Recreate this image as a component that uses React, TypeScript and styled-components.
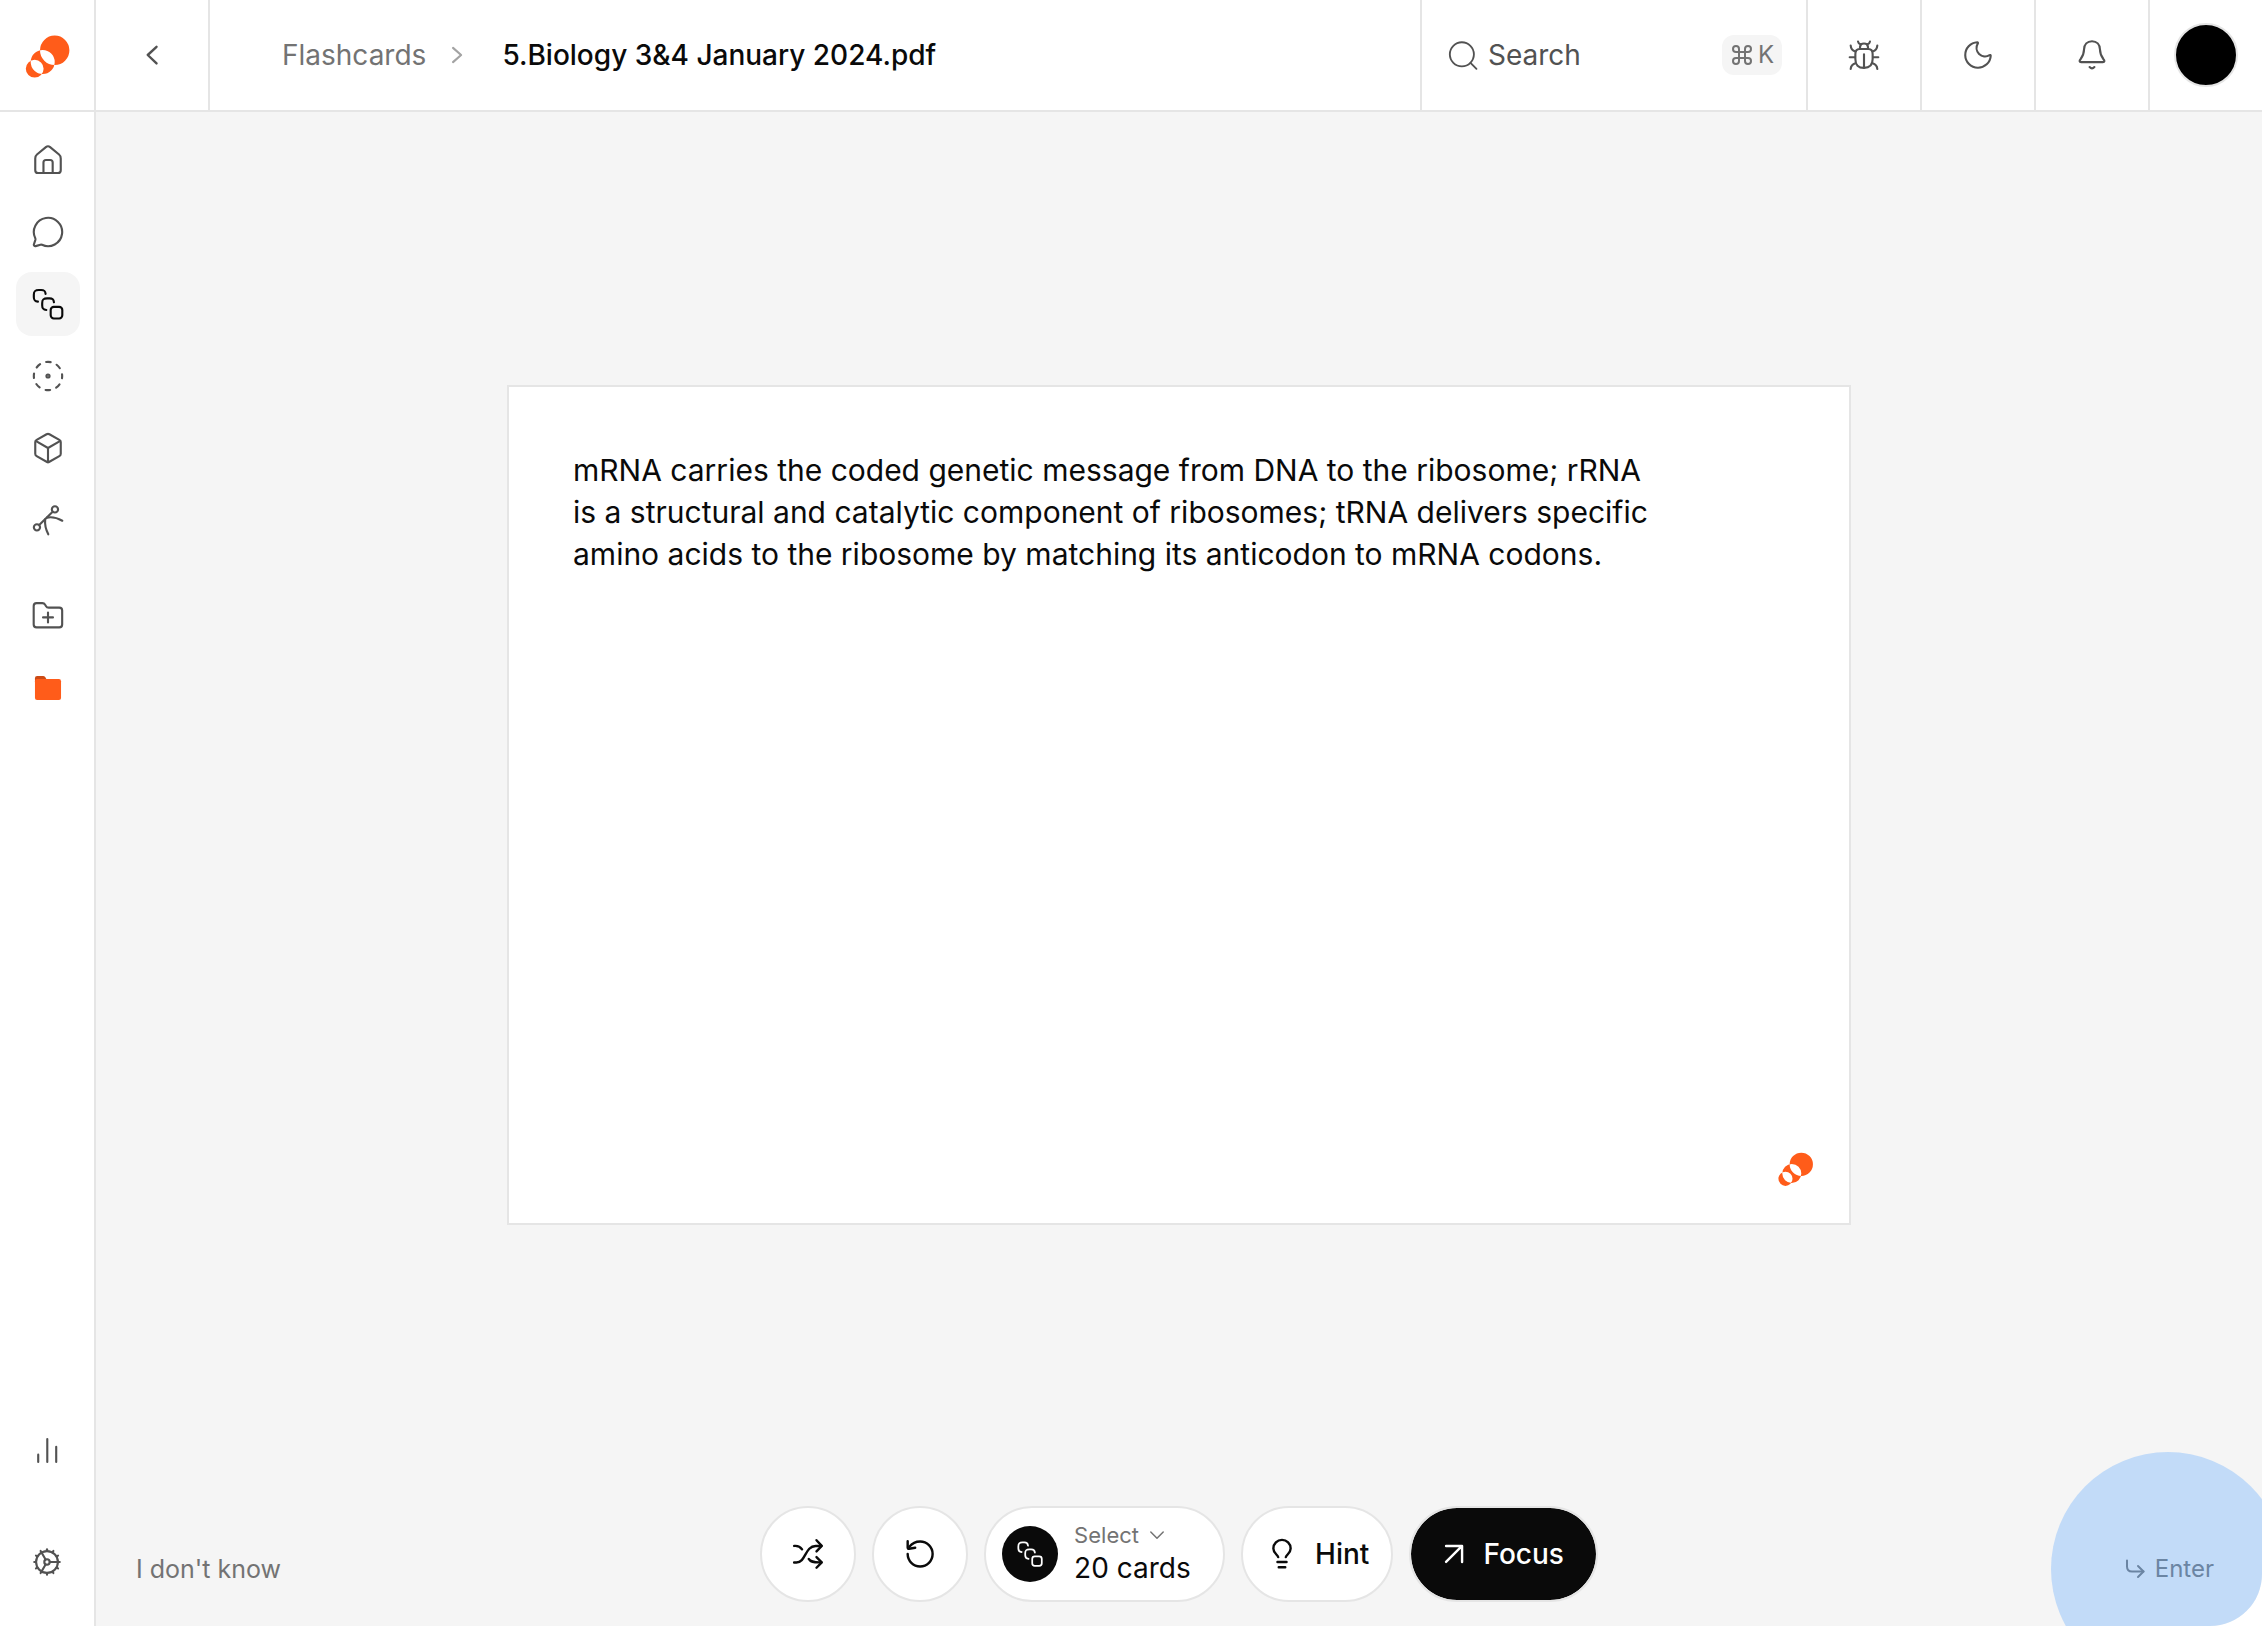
import React from "react";
import styled, { createGlobalStyle, css } from "styled-components";

const color = {
  ink: "#0a0a0a",
  icon: "#525252",
  muted: "#737373",
  faint: "#a3a3a3",
  line: "#e5e5e5",
  surface: "#f5f5f5",
  white: "#ffffff",
  brand: "#ff5c1a",
  brandDark: "#cc4a15",
  pulse: "#c2dbf8",
  pulseInk: "#6b85a3",
};

const GlobalStyle = createGlobalStyle`
  *, *::before, *::after { box-sizing: border-box; }
  body {
    margin: 0;
    background: ${color.white};
    color: ${color.ink};
    font-family: Inter, "Liberation Sans", sans-serif;
    font-size: 28px;
    line-height: 36px;
  }
  button, input, select { font: inherit; color: inherit; }
`;

const Page = styled.div`
  display: flex;
  flex-direction: column;
  min-height: 100vh;
`;

const Header = styled.header`
  display: flex;
  height: 112px;
  border-bottom: 2px solid ${color.line};
`;

const LogoLink = styled.a`
  display: flex;
  align-items: center;
  justify-content: center;
  width: 96px;
  padding-left: 2px;
  border-right: 2px solid ${color.line};
`;

const HeaderButton = styled.button<{ $edge?: "left" | "right" }>`
  display: flex;
  align-items: center;
  justify-content: center;
  flex: none;
  width: 114px;
  padding: 0;
  border: 0 solid ${color.line};
  border-left-width: ${(p) => (p.$edge === "right" ? 0 : 2)}px;
  border-right-width: ${(p) => (p.$edge === "right" ? 2 : 0)}px;
  background: none;
  color: ${color.icon};
  cursor: pointer;
`;

const Breadcrumb = styled.nav`
  display: flex;
  align-items: center;
  flex: 1;
  min-width: 0;
  gap: 14px;
  padding: 0 72px;
  white-space: nowrap;
  svg { color: ${color.faint}; }
`;

const Crumb = styled.a`
  color: ${color.muted};
  text-decoration: none;
`;

const PageTitle = styled.h1`
  margin: 0 0 0 14px;
  font-size: 28px;
  font-weight: 500;
`;

const SearchBox = styled.label`
  display: flex;
  align-items: center;
  gap: 8px;
  width: 386px;
  padding: 0 24px;
  border-left: 2px solid ${color.line};
  color: ${color.icon};
`;

const SearchInput = styled.input`
  flex: 1;
  min-width: 0;
  padding: 0;
  border: 0;
  outline: 0;
  background: none;
  &::placeholder { color: ${color.icon}; opacity: 1; }
`;

const Shortcut = styled.kbd`
  display: flex;
  align-items: center;
  gap: 4px;
  height: 40px;
  padding: 0 8px;
  border-radius: 12px;
  background: ${color.surface};
  color: ${color.muted};
  font-family: inherit;
  font-size: 24px;
`;

const Avatar = styled.span`
  width: 64px;
  height: 64px;
  border: 2px solid ${color.line};
  border-radius: 50%;
  background: #000;
`;

const Body = styled.div`
  display: flex;
  flex: 1;
`;

const Sidebar = styled.nav`
  display: flex;
  flex-direction: column;
  justify-content: space-between;
  flex: none;
  width: 96px;
  padding: 16px 0 32px;
  border-right: 2px solid ${color.line};
`;

const NavGroup = styled.div`
  display: flex;
  flex-direction: column;
  gap: 8px;
  padding-left: 16px;
  & + & { margin-top: 32px; }
`;

const NavFooter = styled.div`
  display: flex;
  flex-direction: column;
  align-items: center;
  gap: 48px;
`;

const NavItem = styled.a<{ $active?: boolean }>`
  display: flex;
  align-items: center;
  justify-content: center;
  width: 64px;
  height: 64px;
  border-radius: 16px;
  background: ${(p) => (p.$active ? color.surface : "none")};
  color: ${(p) => (p.$active ? color.ink : color.icon)};
`;

const Main = styled.main`
  display: flex;
  flex-direction: column;
  flex: 1;
  min-width: 0;
  overflow: hidden;
  border-bottom-right-radius: 52px;
  background: ${color.surface};
`;

const Stage = styled.section`
  display: flex;
  align-items: center;
  justify-content: center;
  flex: 1;
  padding: 0 40px 8px;
`;

const Card = styled.article`
  display: flex;
  flex-direction: column;
  justify-content: space-between;
  width: 100%;
  max-width: 1344px;
  aspect-ratio: 8 / 5;
  padding: 62px 34px 36px 64px;
  border: 2px solid ${color.line};
  background: ${color.white};
`;

const CardText = styled.p`
  max-width: 1088px;
  margin: 0;
  font-size: 30px;
  line-height: 42px;
`;

const CardMark = styled.div`
  display: flex;
  justify-content: flex-end;
`;

const Footer = styled.footer`
  display: grid;
  grid-template-columns: 1fr auto 1fr;
  align-items: end;
  padding: 0 40px 24px;
`;

const textButton = css`
  padding: 0;
  border: 0;
  background: none;
  cursor: pointer;
`;

const SkipButton = styled.button`
  ${textButton}
  justify-self: start;
  margin-bottom: 15px;
  color: ${color.muted};
  font-size: 25px;
`;

const EnterButton = styled.button`
  ${textButton}
  position: relative;
  isolation: isolate;
  display: flex;
  align-items: center;
  justify-self: end;
  gap: 8px;
  margin: 0 8px 15px 0;
  color: ${color.pulseInk};
  font-size: 24px;
  &::before {
    content: "";
    position: absolute;
    z-index: -1;
    top: 50%;
    left: 50%;
    width: 234px;
    height: 234px;
    border-radius: 50%;
    background: ${color.pulse};
    transform: translate(-50%, -50%);
  }
`;

const Toolbar = styled.div`
  display: flex;
  gap: 16px;
`;

const pill = css`
  display: flex;
  align-items: center;
  height: 96px;
  border: 2px solid ${color.line};
  border-radius: 48px;
  background: ${color.white};
  color: ${color.ink};
`;

const RoundButton = styled.button`
  ${pill}
  justify-content: center;
  width: 96px;
  padding: 0;
  cursor: pointer;
`;

const PillButton = styled.button<{ $solid?: boolean }>`
  ${pill}
  gap: ${(p) => (p.$solid ? 12 : 16)}px;
  padding: ${(p) => (p.$solid ? "0 32px 0 26px" : "0 22px")};
  font-weight: 500;
  cursor: pointer;
  ${(p) => p.$solid && css`
    background: ${color.ink};
    background-clip: padding-box;
    color: ${color.white};
  `}
`;

const DeckPicker = styled.label`
  ${pill}
  gap: 16px;
  padding: 0 32px 0 16px;
  cursor: pointer;
`;

const DeckBadge = styled.span`
  display: flex;
  align-items: center;
  justify-content: center;
  width: 56px;
  height: 56px;
  border-radius: 50%;
  background: ${color.ink};
  color: ${color.white};
`;

const DeckField = styled.span`
  display: flex;
  flex-direction: column;
  gap: 2px;
`;

const DeckLabel = styled.span`
  display: flex;
  align-items: center;
  gap: 6px;
  color: ${color.muted};
  font-size: 22px;
  line-height: 26px;
`;

const DeckSelect = styled.select`
  appearance: none;
  padding: 0;
  border: 0;
  outline: 0;
  background: none;
`;

type IconProps = { size?: number; weight?: number; children: React.ReactNode };

const Icon = ({ size = 34, weight = 1.5, children }: IconProps) => (
  <svg
    width={size}
    height={size}
    viewBox="0 0 24 24"
    fill="none"
    stroke="currentColor"
    strokeWidth={weight}
    strokeLinecap="round"
    strokeLinejoin="round"
    aria-hidden="true"
  >
    {children}
  </svg>
);

const Logo = ({ size }: { size: number }) => (
  <svg width={size} height={size} viewBox="24 31 48 48" aria-hidden="true">
    <path
      fill={color.brand}
      fillRule="evenodd"
      d="M40 50.3a14.7 14.7 0 1 0 29.4 0a14.7 14.7 0 1 0-29.4 0ZM30.7 62a12 12 0 1 0 24 0a12 12 0 1 0-24 0ZM25.8 68.7a8.9 8.9 0 1 0 17.8 0a8.9 8.9 0 1 0-17.8 0Z"
    />
  </svg>
);

const HomeIcon = () => (
  <Icon>
    <path d="M3 11c0-1.500.2-2.100 1.200-2.900L10.500 2.900q1.500-1.200 3 0L19.800 8.100c1 .8 1.200 1.400 1.200 2.900V19.200q0 2-2 2H5q-2 0-2-2Z" />
    <path d="M8.800 21V13.800q0-1.800 1.800-1.800h2.900q1.800 0 1.800 1.800V21" />
  </Icon>
);

const ChatIcon = () => (
  <Icon>
    <path d="M2.992 16.342a2 2 0 0 1 .094 1.167l-1.065 3.290a1 1 0 0 0 1.236 1.168l3.413-.998a2 2 0 0 1 1.099.092 10 10 0 1 0-4.777-4.719" />
  </Icon>
);

const CardsIcon = ({ size }: { size?: number }) => (
  <Icon size={size}>
    <path d="M4.900 10.300C2.700 10.100 2 9.400 2 7.200V5.500C2 2.800 2.800 2.100 5.500 2.100h1.700c2.200 0 2.900.6 3.100 2.800" />
    <path d="M10.800 16.200C8.600 16 7.900 15.300 7.900 13.100V11.400C7.900 8.700 8.700 8 11.400 8h1.700c2.200 0 2.900.6 3.100 2.800" />
    <rect x="13.900" y="14" width="8.200" height="8.200" rx="2.200" />
  </Icon>
);

const FocusRingIcon = () => (
  <Icon>
    <circle cx="12" cy="12" r="10" strokeDasharray="3.300 4.554" strokeDashoffset="1.650" />
    <circle cx="12" cy="12" r="1.100" />
  </Icon>
);

const BoxIcon = () => (
  <Icon>
    <path d="M21 8a2 2 0 0 0-1-1.730l-7-4a2 2 0 0 0-2 0l-7 4A2 2 0 0 0 3 8v8a2 2 0 0 0 1 1.730l7 4a2 2 0 0 0 2 0l7-4A2 2 0 0 0 21 16Z" />
    <path d="m3.300 7 8.700 5 8.700-5M12 22V12" />
  </Icon>
);

const BranchIcon = () => (
  <Icon>
    <circle cx="4.200" cy="17.200" r="2.200" />
    <circle cx="16.900" cy="4.500" r="2.200" />
    <path d="M5.800 15.600 15.300 6.100" />
    <path d="M11.300 10.300C14.500 9.600 18.600 10.500 22.100 12.500" />
    <path d="M10 11.600C9.600 15.300 10.500 18.800 12.200 22.100" />
  </Icon>
);

const FolderPlusIcon = () => (
  <Icon>
    <path d="M1.900 4.900q0-2 2-2H8q1.300 0 2 1.200l.5.800q.7 1.200 2 1.200H20q2 0 2 2V18q0 2-2 2H3.900q-2 0-2-2Z" />
    <path d="M12 9.500v7M8.500 13h7" />
  </Icon>
);

const FolderIcon = () => (
  <svg width="34" height="34" viewBox="0 0 24 24" aria-hidden="true">
    <path fill={color.brandDark} d="M2.800 8V5q0-1.500 1.500-1.500H8.500q1 0 1.500.8L11 6V8Z" />
    <rect fill={color.brand} x="2.800" y="5.700" width="18.400" height="14.800" rx="1.500" />
  </svg>
);

const ChartIcon = () => (
  <Icon>
    <path d="M5.800 15.300V20.500M12.200 4.300V20.500M18.500 9.700V20.500" />
  </Icon>
);

const teeth = Array.from({ length: 12 }, (_, i) => i * 30);

const GearIcon = () => (
  <Icon>
    <circle cx="12" cy="12" r="7.700" />
    <circle cx="12" cy="12" r="1.900" />
    {teeth.map((angle) => (
      <path key={angle} d="M20 12h1" transform={`rotate(${angle} 12 12)`} />
    ))}
    {[0, 120, 240].map((angle) => (
      <path key={angle} d="M14 12h5.500" transform={`rotate(${angle} 12 12)`} />
    ))}
  </Icon>
);

const BackIcon = () => (
  <Icon weight={1.700}>
    <path d="M15.200 6.200 9 12l6.200 5.900" />
  </Icon>
);

const CrumbIcon = () => (
  <Icon>
    <path d="M9.200 7 14.900 12l-5.700 5" />
  </Icon>
);

const SearchIcon = () => (
  <Icon weight={1.300}>
    <circle cx="11.200" cy="11.500" r="8.500" />
    <path d="M17.300 17.600 21.500 21.800" />
  </Icon>
);

const CommandIcon = () => (
  <Icon size={24} weight={2}>
    <path d="M15 6v12a3 3 0 1 0 3-3H6a3 3 0 1 0 3 3V6a3 3 0 1 0-3 3h12a3 3 0 1 0-3-3" />
  </Icon>
);

const BugIcon = () => (
  <Icon>
    <path d="M5.900 11.500q0-3.700 3-3.700h6.200q3 0 3 3.700v3.300q0 6.300-6.100 6.300t-6.100-6.300Z" />
    <path d="M12 11.500V21M9.200 7.500V6.300Q9.400 3.900 12 3.900t2.800 2.400V7.500" />
    <path d="M7.800 2.500q.2 1.500 1.900 2M16.200 2.500q-.2 1.500-1.900 2" />
    <path d="M2.600 5.300q.2 3.300 3.300 4.200M21.400 5.300q-.2 3.300-3.300 4.200M1.900 13.600h3.700M22.100 13.600h-3.700M2.600 21.900q.2-3.200 3.400-4.100M21.400 21.900q-.2-3.200-3.400-4.100" />
  </Icon>
);

const MoonIcon = () => (
  <Icon>
    <path d="M20.985 12.486a9 9 0 1 1-9.473-9.472c.405-.022.617.460.402.803a6 6 0 0 0 8.268 8.268c.344-.215.825-.004.803.401" />
  </Icon>
);

const BellIcon = () => (
  <Icon>
    <path d="M12 2.300C8.600 2.300 6.500 4.800 6.400 8c-.1 3.500-.6 4.600-2.500 7-1 1.200-.8 2 .4 2h15.400c1.200 0 1.400-.8.400-2-1.900-2.400-2.400-3.500-2.500-7C17.500 4.800 15.400 2.300 12 2.300Z" />
    <path d="M10.300 20.500q1.700 1.900 3.400 0" />
  </Icon>
);

const ShuffleIcon = () => (
  <Icon weight={1.700}>
    <path d="M18 2.300 21.700 6.300 18 10.200M18 14.200 21.700 17.900 18 21.700" />
    <path d="M2.200 18h1.600C10.500 18 9.800 6.400 17.400 6.300h4" />
    <path d="M2.200 6.300C4.600 6 6.500 6.800 7.800 8.700M12.500 15.500C13.600 17.400 15.400 18.100 21.400 17.900" />
  </Icon>
);

const RestartIcon = () => (
  <Icon weight={1.700}>
    <path d="M3.300 12A8.800 8.800 0 1 0 12.100 3.200C9 3.200 6.400 4.500 4.500 6.900" />
    <path d="M3.300 3v4.400q0 1 1 .9L8.600 7.600" />
  </Icon>
);

const ChevronDownIcon = () => (
  <Icon size={24}>
    <path d="M5.800 9 12 15.200 18.200 9" />
  </Icon>
);

const BulbIcon = () => (
  <Icon weight={1.700}>
    <path d="M9.300 14.200C9 12.500 5.900 11.500 5.900 8.100a6.100 6.100 0 0 1 12.200 0C18.100 11.500 15 12.500 14.700 14.200" />
    <path d="M8.800 17.700h6.400M9.700 21.400h4.600" />
  </Icon>
);

const ArrowUpRightIcon = () => (
  <Icon weight={1.700}>
    <path d="M6.400 6.300H17.700V17.600M17.500 6.500 6.400 17.600" />
  </Icon>
);

const ReturnIcon = () => (
  <Icon size={24} weight={2}>
    <path d="M4 3.500V9.500q0 5 5 5H20.500" />
    <path d="M15 9l5.500 5.500L15 20" />
  </Icon>
);

const App = () => (
  <Page>
    <GlobalStyle />
    <Header>
      <LogoLink href="#" aria-label="Dashboard">
        <Logo size={48} />
      </LogoLink>
      <HeaderButton $edge="right" aria-label="Back">
        <BackIcon />
      </HeaderButton>
      <Breadcrumb aria-label="Breadcrumb">
        <Crumb href="#">Flashcards</Crumb>
        <CrumbIcon />
        <PageTitle>5.Biology 3&amp;4 January 2024.pdf</PageTitle>
      </Breadcrumb>
      <SearchBox>
        <SearchIcon />
        <SearchInput type="text" placeholder="Search" aria-label="Search" />
        <Shortcut>
          <CommandIcon />K
        </Shortcut>
      </SearchBox>
      <HeaderButton aria-label="Report a bug">
        <BugIcon />
      </HeaderButton>
      <HeaderButton aria-label="Dark mode">
        <MoonIcon />
      </HeaderButton>
      <HeaderButton aria-label="Notifications">
        <BellIcon />
      </HeaderButton>
      <HeaderButton aria-label="Account">
        <Avatar />
      </HeaderButton>
    </Header>
    <Body>
      <Sidebar aria-label="Main">
        <div>
          <NavGroup>
            <NavItem href="#" aria-label="Home"><HomeIcon /></NavItem>
            <NavItem href="#" aria-label="Chat"><ChatIcon /></NavItem>
            <NavItem href="#" aria-label="Flashcards" aria-current="page" $active><CardsIcon /></NavItem>
            <NavItem href="#" aria-label="Practice"><FocusRingIcon /></NavItem>
            <NavItem href="#" aria-label="Library"><BoxIcon /></NavItem>
            <NavItem href="#" aria-label="Mind map"><BranchIcon /></NavItem>
          </NavGroup>
          <NavGroup>
            <NavItem href="#" aria-label="New folder"><FolderPlusIcon /></NavItem>
            <NavItem href="#" aria-label="Folder"><FolderIcon /></NavItem>
          </NavGroup>
        </div>
        <NavFooter>
          <NavItem href="#" aria-label="Statistics"><ChartIcon /></NavItem>
          <NavItem href="#" aria-label="Settings"><GearIcon /></NavItem>
        </NavFooter>
      </Sidebar>
      <Main>
        <Stage>
          <Card>
            <CardText>
              mRNA carries the coded genetic message from DNA to the ribosome; rRNA is a structural
              and catalytic component of ribosomes; tRNA delivers specific amino acids to the
              ribosome by matching its anticodon to mRNA codons.
            </CardText>
            <CardMark>
              <Logo size={38} />
            </CardMark>
          </Card>
        </Stage>
        <Footer>
          <SkipButton>I don't know</SkipButton>
          <Toolbar>
            <RoundButton aria-label="Shuffle"><ShuffleIcon /></RoundButton>
            <RoundButton aria-label="Restart"><RestartIcon /></RoundButton>
            <DeckPicker>
              <DeckBadge><CardsIcon size={28} /></DeckBadge>
              <DeckField>
                <DeckLabel>Select<ChevronDownIcon /></DeckLabel>
                <DeckSelect defaultValue="20">
                  <option value="20">20 cards</option>
                </DeckSelect>
              </DeckField>
            </DeckPicker>
            <PillButton><BulbIcon />Hint</PillButton>
            <PillButton $solid><ArrowUpRightIcon />Focus</PillButton>
          </Toolbar>
          <EnterButton><ReturnIcon />Enter</EnterButton>
        </Footer>
      </Main>
    </Body>
  </Page>
);

export default App;
